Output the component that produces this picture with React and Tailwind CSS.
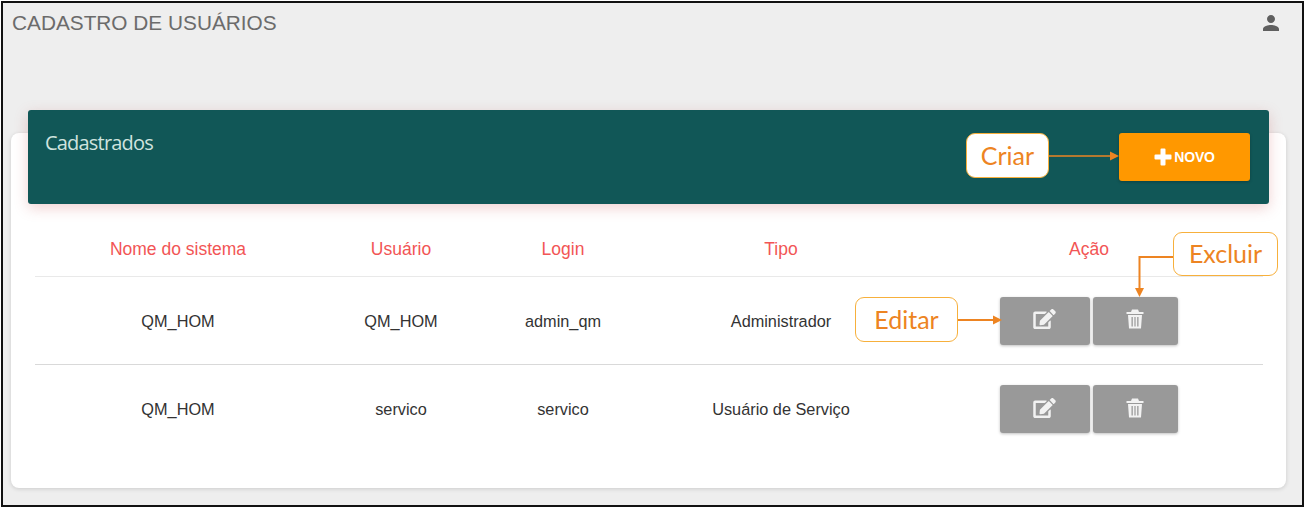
import React from "react";
import { FaEdit } from "react-icons/fa";
import { MdPerson } from "react-icons/md";

const rows = [
  ["QM_HOM", "QM_HOM", "admin_qm", "Administrador"],
  ["QM_HOM", "servico", "servico", "Usuário de Serviço"],
];
const gridCols = "grid grid-cols-[287px_158px_166px_270px_346px] items-center text-center";

function Callout({ className, children }) {
  return (
    <div className={`absolute flex items-center justify-center bg-white border-[1.5px] border-[#f7b03c] rounded-[9px] text-[#ed8422] text-[25px] font-['Lato','Noto_Sans',sans-serif] ${className}`}>
      {children}
    </div>
  );
}

function TrashIcon() {
  return (
    <svg width="18" height="20" viewBox="0 0 18 20" fill="currentColor">
      <path d="M6 0.5H12L13 3H17.5V5H0.5V3H5Z" />
      <path fillRule="evenodd" d="M2 6H16L15 19.5H3ZM5.5 8V17.5H6.8V8ZM8.4 8V17.5H9.6V8ZM11.2 8V17.5H12.5V8Z" />
    </svg>
  );
}

function PlusIcon() {
  return (
    <svg width="18" height="18" viewBox="0 0 18 18" fill="currentColor">
      <path d="M6.5 1.5a1 1 0 0 1 1-1h3a1 1 0 0 1 1 1v5h5a1 1 0 0 1 1 1v3a1 1 0 0 1-1 1h-5v5a1 1 0 0 1-1 1h-3a1 1 0 0 1-1-1v-5h-5a1 1 0 0 1-1-1v-3a1 1 0 0 1 1-1h5z" />
    </svg>
  );
}

function Actions() {
  return (
    <div className="flex justify-center gap-[3px] mr-px">
      <button className="w-[90px] h-[48px] bg-[#999999] rounded-[3px] flex items-center justify-center text-[#f2f2f2] shadow-[0_1px_3px_rgba(0,0,0,0.25)]">
        <FaEdit className="w-[23px] h-[20px] mb-[3px]" />
      </button>
      <button className="w-[85px] h-[48px] bg-[#999999] rounded-[3px] flex items-center justify-center text-[#f2f2f2] shadow-[0_1px_3px_rgba(0,0,0,0.25)]">
        <span className="mb-[3px]"><TrashIcon /></span>
      </button>
    </div>
  );
}

export default function App() {
  return (
    <div className="relative w-[1305px] h-[508px] overflow-hidden bg-white font-['Liberation_Sans',Arial,sans-serif]">
      <div className="mx-px mt-px w-[1303px] h-[506px] border-2 border-[#111111] bg-[#eeeeee] pt-[7px] pl-[8px] pr-[13px]">
        <div className="flex items-start justify-between h-[31px] pl-px">
          <h1 className="text-[20.8px] leading-[26px] text-[#6b6b6b]">CADASTRO DE USUÁRIOS</h1>
          <MdPerson className="w-[24px] h-[24px] text-[#5f5f5f] mt-px mr-[6px]" />
        </div>
        <div className="mt-[92px] w-[1275px] h-[355px] bg-white rounded-[8px] shadow-[0_1px_4px_rgba(0,0,0,0.15)] px-[17px] flex flex-col">
          <div className="-mt-[23px] w-[1241px] h-[94px] shrink-0 bg-[#115757] rounded-[3px] shadow-[0_4px_14px_rgba(200,90,90,0.28)] flex items-start justify-between pl-[17px] pr-[19px] pt-[19px]">
            <span className="text-[20px] leading-[27px] text-[#cfe3df] tracking-[-0.8px] font-['Open_Sans','Noto_Sans',sans-serif]">Cadastrados</span>
            <button className="mt-[4px] w-[131px] h-[48px] bg-[#ff9800] rounded-[3px] flex items-center justify-center gap-[2px] text-white shadow-[0_1px_3px_rgba(0,0,0,0.25)]">
              <PlusIcon />
              <span className="text-[14px] font-bold tracking-[-0.2px]">NOVO</span>
            </button>
          </div>
          <div className="ml-[7px] mt-[21px] w-[1228px]">
            <div className={`${gridCols} h-[52px] border-b border-[#e9e9e9] text-[17.5px] text-[#f25555]`}>
              <div className="mb-[2px] mr-px">Nome do sistema</div>
              <div className="mb-[2px]">Usuário</div>
              <div className="mb-[2px]">Login</div>
              <div className="mb-[2px]">Tipo</div>
              <div className="mb-[2px]">Ação</div>
            </div>
            {rows.map((row, i) => (
              <div key={i} className={`${gridCols} h-[88px] text-[16.3px] text-[#333333] ${i === 0 ? "border-b border-[#d9d9d9]" : ""}`}>
                {row.map((cell, j) => (
                  <div key={j} className={`${i === 0 ? "mt-[2px]" : ""} ${j === 0 ? "mr-px" : ""}`}>{cell}</div>
                ))}
                <Actions />
              </div>
            ))}
          </div>
        </div>
      </div>

      <svg className="absolute inset-0 pointer-events-none" width="1305" height="508" fill="none">
        <path d="M1049 156H1112" stroke="#ed8422" strokeWidth="1.5" />
        <path d="M1110 151.5L1119 156L1110 160.5Z" fill="#ed8422" />
        <path d="M957 320H994" stroke="#ed8422" strokeWidth="2" />
        <path d="M993 315.5L1002 320L993 324.5Z" fill="#ed8422" />
        <path d="M1174 257H1139.5V290" stroke="#ed8422" strokeWidth="2" />
        <path d="M1135 288L1139.5 297L1144 288Z" fill="#ed8422" />
      </svg>
      <Callout className="left-[966px] top-[133px] w-[83px] h-[45px]">Criar</Callout>
      <Callout className="left-[1173px] top-[232px] w-[105px] h-[44px]">Excluir</Callout>
      <Callout className="left-[855px] top-[297px] w-[103px] h-[45px]">Editar</Callout>
    </div>
  );
}
